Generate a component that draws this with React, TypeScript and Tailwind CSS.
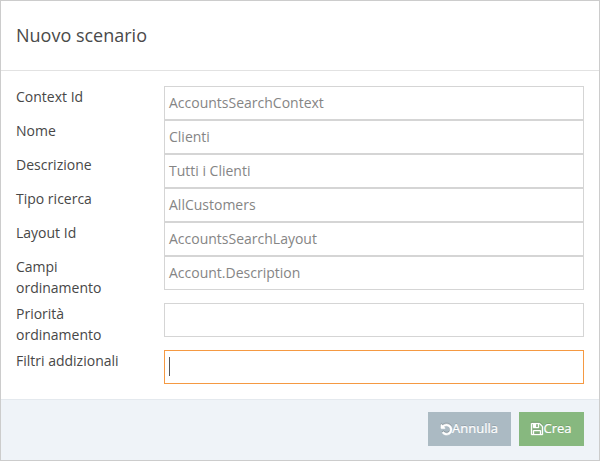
import React from "react";

type Field = { label: string; value: string; focused?: boolean };

const fields: Field[] = [
  { label: "Context Id", value: "AccountsSearchContext" },
  { label: "Nome", value: "Clienti" },
  { label: "Descrizione", value: "Tutti i Clienti" },
  { label: "Tipo ricerca", value: "AllCustomers" },
  { label: "Layout Id", value: "AccountsSearchLayout" },
  { label: "Campi ordinamento", value: "Account.Description" },
  { label: "Priorità ordinamento", value: "" },
  { label: "Filtri addizionali", value: "", focused: true },
];

function UndoIcon() {
  return (
    <svg
      viewBox="0 128 1536 1536"
      fill="currentColor"
      stroke="currentColor"
      strokeWidth="90"
      className="size-[11px] shrink-0 overflow-visible drop-shadow-[0_-1px_0_rgba(0,0,0,0.2)]"
    >
      <path d="M1536 896q0 156-61 298t-164 245-245 164-298 61q-172 0-327-72.5T177 1387q-7-10-6.5-22.5t8.5-20.5l137-138q10-9 25-9 16 2 23 12 73 95 179 147t225 52q104 0 198.5-40.5T1130 1259t109.5-163.5T1280 897t-40.5-198.5T1130 535 966.5 425.5 768 385q-98 0-188 35.5T420 522l137 138q31 30 14 69-17 40-59 40H64q-26 0-45-19T0 705V257q0-42 40-59 39-17 69 14l130 129q107-101 244.5-156.5T768 129q156 0 298 61t245 164 164 245 61 298z" />
    </svg>
  );
}

function SaveIcon() {
  return (
    <svg
      viewBox="0 128 1536 1536"
      fill="currentColor"
      stroke="currentColor"
      strokeWidth="50"
      className="size-[12px] shrink-0 overflow-visible drop-shadow-[0_-1px_0_rgba(0,0,0,0.2)]"
    >
      <path d="M384 1536h768v-384H384v384zm896 0h128V640q0-14-10-38.5t-20-34.5l-281-281q-10-10-34-20t-39-10v416q0 40-28 68t-68 28H352q-40 0-68-28t-28-68V256H128v1280h128v-416q0-40 28-68t68-28h832q40 0 68 28t28 68v416zM896 608V288q0-13-9.5-22.5T864 256H672q-13 0-22.5 9.5T640 288v320q0 13 9.5 22.5T672 640h192q13 0 22.5-9.5T896 608zm640 32v928q0 40-28 68t-68 28H96q-40 0-68-28t-28-68V224q0-40 28-68t68-28h928q40 0 88 20t76 48l280 280q28 28 48 76t20 88z" />
    </svg>
  );
}

function FieldRow({ label, value, focused }: Field) {
  return (
    <div className="flex items-start">
      <label className="mb-[5px] w-[148px] shrink-0 pr-6 text-[14px] leading-[21px] text-[#474747]">
        {label}
      </label>
      <div
        className={`flex h-[34px] flex-1 items-center border px-1 text-[14px] leading-[20px] text-[#858585] ${
          focused ? "border-[#f59942]" : "border-[#d5d5d5]"
        }`}
      >
        {focused ? <span className="mb-px h-[19px] w-px bg-[#555555]" /> : value}
      </div>
    </div>
  );
}

export default function App() {
  return (
    <div className="flex h-[461px] w-[600px] flex-col border border-[#cccccc] bg-white font-['Open_Sans',sans-serif]">
      <header className="flex h-[70px] items-center border-b border-[#e2e2e2] px-[15px]">
        <h4 className="text-[18px] leading-[27px] font-normal text-[#4a4a4a]">Nuovo scenario</h4>
      </header>
      <div className="flex-1 px-[15px] pt-[15px]">
        {fields.map((f) => (
          <FieldRow key={f.label} {...f} />
        ))}
      </div>
      <footer className="flex h-[61px] items-start justify-end gap-2 border-t border-[#e4e9ee] bg-[#eff3f8] px-[15px] pt-3">
        <button className="flex h-[34px] w-[83px] items-center justify-center bg-[#abbac3] text-[13px] text-white [-webkit-text-stroke:0.2px_white] [text-shadow:0_-1px_0_rgba(0,0,0,0.15)]">
          <UndoIcon />
          Annulla
        </button>
        <button className="flex h-[34px] w-[65px] items-center justify-center bg-[#87b87f] text-[13px] text-white [-webkit-text-stroke:0.2px_white] [text-shadow:0_-1px_0_rgba(0,0,0,0.15)]">
          <SaveIcon />
          Crea
        </button>
      </footer>
    </div>
  );
}
